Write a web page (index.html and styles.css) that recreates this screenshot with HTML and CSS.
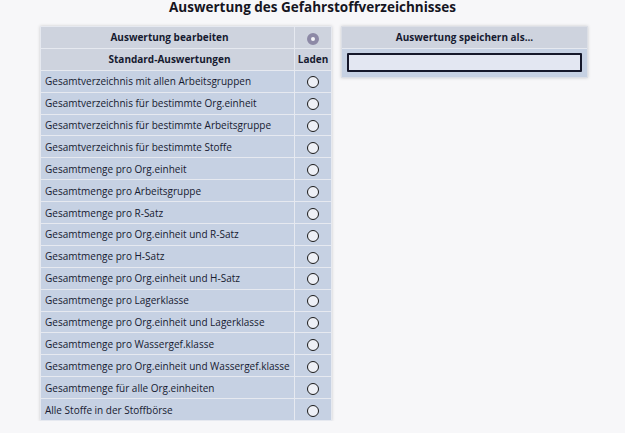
FILE: index.html
```html
<!DOCTYPE html>
<html lang="de">
<head>
<meta charset="utf-8">
<link rel="stylesheet" href="styles.css">
</head>
<body>
<h1 class="title">Auswertung des Gefahrstoffverzeichnisses</h1>
<div class="layout">
  <table class="list">
    <tr class="head"><th>Auswertung bearbeiten</th><th class="rc"><span class="radio disabled"></span></th></tr>
    <tr class="head"><th>Standard-Auswertungen</th><th class="rc">Laden</th></tr>
    <tr><td>Gesamtverzeichnis mit allen Arbeitsgruppen</td><td class="rc"><span class="radio"></span></td></tr>
    <tr><td>Gesamtverzeichnis für bestimmte Org.einheit</td><td class="rc"><span class="radio"></span></td></tr>
    <tr><td>Gesamtverzeichnis für bestimmte Arbeitsgruppe</td><td class="rc"><span class="radio"></span></td></tr>
    <tr><td>Gesamtverzeichnis für bestimmte Stoffe</td><td class="rc"><span class="radio"></span></td></tr>
    <tr><td>Gesamtmenge pro Org.einheit</td><td class="rc"><span class="radio"></span></td></tr>
    <tr><td>Gesamtmenge pro Arbeitsgruppe</td><td class="rc"><span class="radio"></span></td></tr>
    <tr><td>Gesamtmenge pro R-Satz</td><td class="rc"><span class="radio"></span></td></tr>
    <tr><td>Gesamtmenge pro Org.einheit und R-Satz</td><td class="rc"><span class="radio"></span></td></tr>
    <tr><td>Gesamtmenge pro H-Satz</td><td class="rc"><span class="radio"></span></td></tr>
    <tr><td>Gesamtmenge pro Org.einheit und H-Satz</td><td class="rc"><span class="radio"></span></td></tr>
    <tr><td>Gesamtmenge pro Lagerklasse</td><td class="rc"><span class="radio"></span></td></tr>
    <tr><td>Gesamtmenge pro Org.einheit und Lagerklasse</td><td class="rc"><span class="radio"></span></td></tr>
    <tr><td>Gesamtmenge pro Wassergef.klasse</td><td class="rc"><span class="radio"></span></td></tr>
    <tr><td>Gesamtmenge pro Org.einheit und Wassergef.klasse</td><td class="rc"><span class="radio"></span></td></tr>
    <tr><td>Gesamtmenge für alle Org.einheiten</td><td class="rc"><span class="radio"></span></td></tr>
    <tr><td>Alle Stoffe in der Stoffbörse</td><td class="rc"><span class="radio"></span></td></tr>
  </table>
  <div class="save">
    <div class="save-head">Auswertung speichern als...</div>
    <div class="save-body"><input class="save-input" type="text"></div>
  </div>
</div>
</body>
</html>
```
FILE: styles.css
```css
html, body {
  margin: 0;
  padding: 0;
  background: #f7f7f9;
  font-family: "Open Sans", "DejaVu Sans", sans-serif;
  color: #161a30;
}
.title {
  margin: 0;
  padding-top: 1px;
  height: 19px;
  line-height: 12px;
  font-size: 13.5px;
  font-weight: 700;
  text-align: center;
  color: #15151f;
}
.layout {
  display: flex;
  align-items: flex-start;
  gap: 9px;
  padding-left: 40px;
  padding-top: 6px;
}
.list {
  border-collapse: collapse;
  width: 292px;
  font-size: 10px;
  box-shadow: 0 0 3px rgba(0,0,0,0.18);
  border: 1px solid #dcdfe6;
}
.list td, .list th {
  border: 1px solid #e6e9f0;
  height: 21.9px;
  padding: 0 0 0 4px;
  box-sizing: border-box;
}
.list th {
  background: #ced3de;
  font-weight: 700;
  text-align: center;
}
.list td {
  background: #c6d1e3;
}
.list .rc {
  width: 37px;
  padding: 0;
  text-align: center;
}
.radio {
  display: inline-block;
  width: 10px;
  height: 10px;
  border: 1px solid #1a1a1a;
  border-radius: 50%;
  background: #eef0f6;
  vertical-align: middle;
}
.radio.disabled {
  width: 4px;
  height: 4px;
  border: 4px solid #8d89a6;
  background: #f4f4f8;
}
.save {
  width: 245px;
  box-shadow: 0 0 3px rgba(0,0,0,0.18);
  border: 1px solid #dcdfe6;
}
.save-head {
  background: #ced3de;
  height: 21px;
  line-height: 21px;
  text-align: center;
  font-size: 10px;
  font-weight: 700;
  border-bottom: 1px solid #e6e9f0;
}
.save-body {
  background: #c6d1e3;
  padding: 4px 5px 5px 5px;
}
.save-input {
  display: block;
  box-sizing: border-box;
  width: 100%;
  height: 19px;
  margin: 0;
  border: 2px solid #15172a;
  background: #e3e7f2;
  border-radius: 1px;
  outline: none;
}
```
